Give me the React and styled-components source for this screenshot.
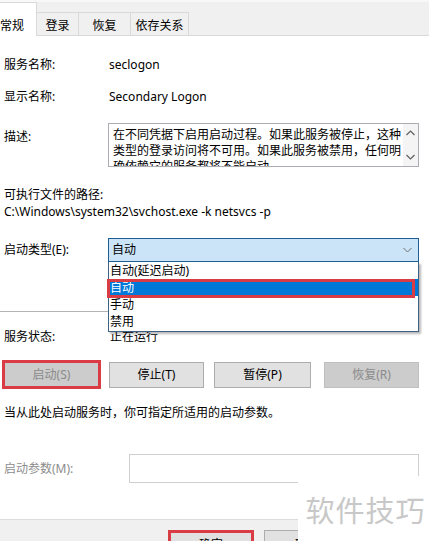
import React from "react";
import styled, { createGlobalStyle } from "styled-components";

const Global = createGlobalStyle`
  html, body { margin: 0; padding: 0; background: #fff; }
  body {
    font-family: "Noto Sans", "Noto Sans CJK SC", sans-serif;
    font-size: 12px;
    color: #000;
  }
  #root { width: 429px; height: 541px; overflow: hidden; }
`;

const Window = styled.div`
  position: relative;
  width: 429px;
  height: 541px;
  overflow: hidden;
  display: flex;
  flex-direction: column;
  background: #fff;
`;

const TabBar = styled.div`
  flex: none;
  height: 36px;
  box-sizing: border-box;
  background: #f0f0f0;
  border-top: 2px solid #f8f8f8;
  border-bottom: 1px solid #d9d9d9;
  display: flex;
  align-items: flex-end;
`;

const Tab = styled.div`
  box-sizing: border-box;
  width: ${(p) => p.$w}px;
  height: ${(p) => (p.$active ? 34 : 23)}px;
  margin-bottom: ${(p) => (p.$active ? -1 : 0)}px;
  margin-left: ${(p) => (p.$first ? -9 : -1)}px;
  background: ${(p) => (p.$active ? "#fff" : "#f0f0f0")};
  border: 1px solid #d9d9d9;
  border-bottom: none;
  display: flex;
  align-items: flex-end;
  justify-content: ${(p) => (p.$first ? "flex-start" : "center")};
  padding-left: ${(p) => (p.$first ? 8 : 0)}px;
  padding-bottom: ${(p) => (p.$active ? 1 : 0)}px;
  line-height: 18px;
  position: relative;
  z-index: ${(p) => (p.$active ? 1 : 0)};
`;

const Content = styled.div`
  flex: none;
  display: flex;
  flex-direction: column;
  padding: 0 10px 0 4px;
`;

const Row = styled.div`
  display: flex;
  align-items: ${(p) => (p.$top ? "flex-start" : "center")};
  margin-top: ${(p) => p.$mt || 0}px;
`;

const Label = styled.div`
  flex: none;
  width: ${(p) => p.$w || 104}px;
  line-height: 18px;
  padding-top: ${(p) => p.$pt || 0}px;
  color: ${(p) => (p.$disabled ? "#8d8d8d" : "#000")};
  white-space: nowrap;
`;

const Value = styled.div`
  line-height: 18px;
  padding-left: 1px;
  white-space: nowrap;
`;

const Line = styled.div`
  line-height: 17px;
  margin-top: ${(p) => p.$mt || 0}px;
  white-space: nowrap;
`;

const DescBox = styled.div`
  flex: 1;
  height: 44px;
  box-sizing: border-box;
  border: 1px solid #abadb3;
  display: flex;
  overflow: hidden;
`;

const DescText = styled.div`
  flex: 1;
  padding: 3px 0 0 4px;
  line-height: 16px;
  overflow: hidden;
`;

const DescLine = styled.div`
  white-space: nowrap;
`;

const ScrollBar = styled.div`
  flex: none;
  width: 15px;
  background: #f4f4f4;
  display: flex;
  flex-direction: column;
  justify-content: space-between;
  align-items: center;
  padding: 6px 0 6px;
`;

const ComboWrap = styled.div`
  position: relative;
  flex: 1;
`;

const Combo = styled.div`
  box-sizing: border-box;
  height: 24px;
  background: #cce4f7;
  border: 1px solid #1f5d95;
  display: flex;
  align-items: center;
  justify-content: space-between;
  padding: 0 6px 0 3px;
  line-height: 18px;
`;

const DropList = styled.div`
  position: absolute;
  top: 100%;
  left: 0;
  right: 0;
  box-sizing: border-box;
  background: #fff;
  border: 1px solid #3f6184;
  border-top: none;
  box-shadow: 2px 2px 2px rgba(0, 0, 0, 0.28);
  padding-bottom: 1px;
  z-index: 5;
`;

const Item = styled.div`
  position: relative;
  height: 17px;
  line-height: 17px;
  padding-left: 1px;
  background: ${(p) => (p.$sel ? "#0078d7" : "transparent")};
  color: ${(p) => (p.$sel ? "#fff" : "#000")};
  white-space: nowrap;
`;

const RedBox = styled.div`
  position: absolute;
  left: ${(p) => p.$l}px;
  right: ${(p) => p.$r}px;
  top: ${(p) => p.$t}px;
  bottom: ${(p) => p.$b}px;
  border: 3px solid #d93c44;
  pointer-events: none;
`;

const Separator = styled.div`
  height: 1px;
  background: #b4b4b4;
  margin-top: ${(p) => p.$mt}px;
  margin-left: -4px;
`;

const ButtonRow = styled.div`
  display: flex;
  gap: 10px;
  margin-top: 16px;
`;

const Button = styled.div`
  position: relative;
  flex: none;
  box-sizing: border-box;
  width: ${(p) => p.$w || 95}px;
  height: 26px;
  margin-left: ${(p) => (p.$push ? "auto" : "0")};
  background: ${(p) => (p.$disabled ? "#cccccc" : "#e1e1e1")};
  border: 1px solid ${(p) => (p.$disabled ? "#bfbfbf" : "#adadad")};
  color: ${(p) => (p.$disabled ? "#8a8a8a" : "#000")};
  display: flex;
  align-items: center;
  justify-content: center;
  line-height: 18px;
`;

const ParamInput = styled.div`
  box-sizing: border-box;
  flex: 1;
  height: 29px;
  border: 1px solid #cfcfcf;
  background: #fff;
`;

const Footer = styled.div`
  flex: 1;
  margin-top: 36px;
  background: #f0f0f0;
  border-top: 1px solid #dcdcdc;
  display: flex;
  gap: 10px;
  padding: 10px 0 0 168px;
`;

const FooterButton = styled.div`
  position: relative;
  flex: none;
  box-sizing: border-box;
  width: 86px;
  height: 26px;
  background: #e1e1e1;
  border: 1px solid #adadad;
  display: flex;
  justify-content: center;
  padding-top: 5px;
  line-height: 18px;
`;

const Watermark = styled.div`
  position: absolute;
  right: 0;
  bottom: 0;
  width: 131px;
  height: 65px;
  background: #fff;
  display: flex;
  align-items: center;
  justify-content: center;
  padding-left: 4px;
  box-sizing: border-box;
  font-family: "Noto Sans CJK SC", sans-serif;
  font-size: 29px;
  color: #c8c8c8;
  letter-spacing: 1px;
  z-index: 10;
`;

const Chevron = ({ up }) => (
  <svg width="9" height="6" viewBox="0 0 9 6">
    <path
      d={up ? "M0.5 5 L4.5 1 L8.5 5" : "M0.5 1 L4.5 5 L8.5 1"}
      fill="none"
      stroke="#606060"
      strokeWidth="1.2"
    />
  </svg>
);

export default function App() {
  return (
    <>
      <Global />
      <Window>
        <TabBar>
          <Tab $w={46} $active $first>
            常规
          </Tab>
          <Tab $w={43}>登录</Tab>
          <Tab $w={53}>恢复</Tab>
          <Tab $w={59}>依存关系</Tab>
        </TabBar>
        <Content>
          <Row $mt={20}>
            <Label>服务名称:</Label>
            <Value>seclogon</Value>
          </Row>
          <Row $mt={14}>
            <Label>显示名称:</Label>
            <Value>Secondary Logon</Value>
          </Row>
          <Row $mt={17} $top>
            <Label $pt={5}>描述:</Label>
            <DescBox>
              <DescText>
                <DescLine>在不同凭据下启用启动过程。如果此服务被停止，这种</DescLine>
                <DescLine>类型的登录访问将不可用。如果此服务被禁用，任何明</DescLine>
                <DescLine>确依赖它的服务都将不能启动。</DescLine>
              </DescText>
              <ScrollBar>
                <Chevron up />
                <Chevron />
              </ScrollBar>
            </DescBox>
          </Row>
          <Line $mt={19}>可执行文件的路径:</Line>
          <Line>C:\Windows\system32\svchost.exe -k netsvcs -p</Line>
          <Row $mt={18}>
            <Label>启动类型(E):</Label>
            <ComboWrap>
              <Combo>
                <span>自动</span>
                <svg width="9" height="6" viewBox="0 0 9 6">
                  <path d="M0.5 1 L4.5 5 L8.5 1" fill="none" stroke="#707070" strokeWidth="1" />
                </svg>
              </Combo>
              <DropList>
                <Item>自动(延迟启动)</Item>
                <Item $sel>
                  自动
                  <RedBox $l={-2} $r={3} $t={0} $b={-2} />
                </Item>
                <Item>手动</Item>
                <Item>禁用</Item>
              </DropList>
            </ComboWrap>
          </Row>
          <Separator $mt={49} />
          <Row $mt={16}>
            <Label $w={105}>服务状态:</Label>
            <Value>正在运行</Value>
          </Row>
          <ButtonRow>
            <Button $disabled>
              启动(S)
              <RedBox $l={-3} $r={-3} $t={-3} $b={-2} />
            </Button>
            <Button>停止(T)</Button>
            <Button $w={97}>暂停(P)</Button>
            <Button $disabled $push>
              恢复(R)
            </Button>
          </ButtonRow>
          <Line $mt={16}>当从此处启动服务时，你可指定所适用的启动参数。</Line>
          <Row $mt={33}>
            <Label $w={125} $disabled>
              启动参数(M):
            </Label>
            <ParamInput />
          </Row>
        </Content>
        <Footer>
          <FooterButton>
            确定
            <RedBox $l={-1} $r={-1} $t={-1} $b={-1} />
          </FooterButton>
          <FooterButton>取消</FooterButton>
        </Footer>
        <Watermark>软件技巧</Watermark>
      </Window>
    </>
  );
}
